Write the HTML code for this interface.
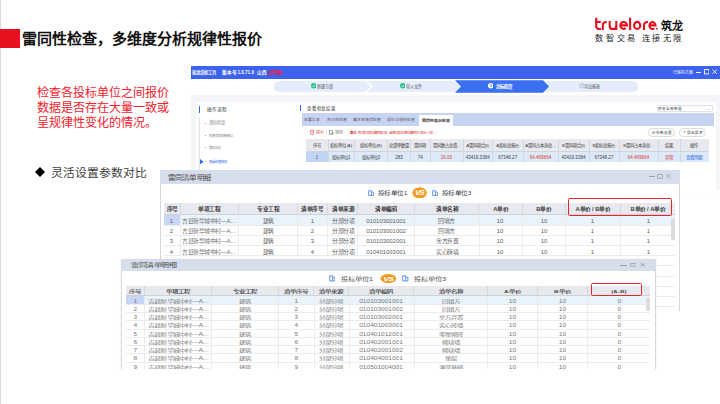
<!DOCTYPE html>
<html lang="zh-CN">
<head>
<meta charset="utf-8">
<style>
*{margin:0;padding:0;box-sizing:border-box}
html,body{width:720px;height:404px;overflow:hidden;background:#fff;font-family:"Liberation Sans",sans-serif}
.a{position:absolute}
.t{display:flex;align-items:center;white-space:nowrap;line-height:1}
.slide{position:absolute;left:0;top:0;width:720px;height:404px;background:#fff;overflow:hidden}
.edge{left:0;top:0;width:1px;height:404px;background:#dcdcdc}
.redblk{left:0;top:29px;width:20px;height:19px;background:#e8101f}
.title{left:22px;top:28.8px;font-size:15px;font-weight:900;color:#111;white-space:nowrap;line-height:20px}
.desc{left:37px;top:86.4px;font-size:12.1px;color:#f7202c;line-height:14.9px;white-space:nowrap}
.bullet{left:34.8px;top:166.8px;width:10px;height:10px}
.btxt{left:51px;top:165.7px;font-size:11.8px;color:#404040;line-height:14px;white-space:nowrap}
.nw{white-space:nowrap}
</style>
</head>
<body>
<div class="slide">
  <div class="a edge"></div>
  <div class="a redblk"></div>
  <div class="a title">雷同性检查，多维度分析规律性报价</div>
  <svg class="a" style="left:590px;top:14px" width="70" height="20" viewBox="590 14 70 20">
    <g fill="none" stroke="#e60f1e" stroke-width="2.1">
      <path d="M596.25 17.8V26.3Q596.25 29.05 599.2 29.05H601"/>
      <path d="M595 21.95H600.8"/>
      <path d="M602.8 30.1V25.2Q602.8 21.95 606.8 21.95"/>
      <path d="M609.7 20.9V25.9Q609.7 29.05 613 29.05Q616.3 29.05 616.3 25.9V20.9M616.3 25V30.1"/>
      <path d="M620.3 25.4H627.05A3.4 3.45 0 1 0 625.7 28.2"/>
      <path d="M630.1 17.7V30.1"/>
      <ellipse cx="637.15" cy="25.4" rx="3.1" ry="3.55"/>
      <path d="M644 30.1V25.2Q644 21.95 648 21.95"/>
      <path d="M649.5 25.4H655.5A3.05 3.45 0 1 0 654.4 28.2"/>
    </g>
    <circle cx="656.9" cy="28.7" r="0.9" fill="#e60f1e"/>
  </svg>
  <div class="a nw" style="left:660.5px;top:18.5px;font-size:11px;font-weight:bold;color:#111;line-height:14px">筑龙</div>
  <div class="a nw" style="left:595.2px;top:34.3px;font-size:8.2px;color:#1a1a1a;letter-spacing:2.75px;line-height:10px">数智交易</div>
  <div class="a nw" style="left:641.6px;top:34.3px;font-size:8.2px;color:#1a1a1a;letter-spacing:2.6px;line-height:10px">连接无限</div>
  <div class="a desc">检查各投标单位之间报价<br>数据是否存在大量一致或<br>呈规律性变化的情况。</div>
  <svg class="a bullet" viewBox="0 0 10 10"><path d="M5 0L10 5L5 10L0 5Z" fill="#000"/></svg>
  <div class="a btxt">灵活设置参数对比</div>
<div class="a" style="left:191px;top:66px;width:529px;height:124px;background:#f5f6fa"></div><div class="a" style="left:191px;top:65.8px;width:529px;height:13.2px;background:#3c62ef"></div><div class="a t" style="left:192.2px;top:66px;width:30px;height:13px;justify-content:flex-start;font-size:4.3px;color:#fff;font-weight:bold;"><span style="display:inline-block;position:relative;top:0.45px;">筑龙清标工具</span></div><div class="a t" style="left:222.4px;top:66px;width:34px;height:13px;justify-content:flex-start;font-size:4.6px;color:#fff;font-weight:bold;"><span style="display:inline-block;position:relative;top:0.85px;">版本号1.0.71.0</span></div><div class="a t" style="left:256.9px;top:66px;width:12px;height:13px;justify-content:flex-start;font-size:4.6px;color:#fff;font-weight:bold;"><span style="display:inline-block;position:relative;top:0.85px;">山西</span></div><div class="a t" style="left:268px;top:66px;width:20px;height:13px;justify-content:flex-start;font-size:4.4px;color:#e8203c;font-weight:bold;"><span style="display:inline-block;position:relative;top:0.45px;">(试用版)</span></div><div class="a t" style="left:673.3px;top:66px;width:22px;height:13px;justify-content:flex-start;font-size:4.0px;color:#fff;font-weight:normal;"><span style="display:inline-block;position:relative;top:0.45px;">已保存方案</span></div><div class="a" style="left:696.3px;top:71.6px;width:4.5px;height:0.8px;background:#fff"></div><svg class="a" style="left:703.8px;top:69.2px" width="5.4" height="5.4" viewBox="0 0 5.4 5.4"><rect x="0.5" y="0.5" width="4.4" height="4.4" fill="none" stroke="#fff" stroke-width="0.9"/></svg><svg class="a" style="left:711.5px;top:69.2px" width="5.4" height="5.4" viewBox="0 0 5.4 5.4"><path d="M0.5 0.5L4.9 4.9M4.9 0.5L0.5 4.9" stroke="#fff" stroke-width="0.9"/></svg><div class="a" style="left:191px;top:79px;width:529px;height:16px;background:#fff"></div><div class="a" style="left:273.6px;top:81px;width:364.4px;height:11px;background:#e5ecfb;border-radius:5.5px"></div><svg class="a" style="left:273px;top:81px;overflow:visible" width="366" height="11" viewBox="0 0 366 11"><path d="M93 0L99 5.5L93 11" fill="none" stroke="#fff" stroke-width="1.2"/><path d="M182 -0.7H270L276 5.5L270 11.8H182L188 5.5Z" fill="#3a6ff0"/></svg><svg class="a" style="left:310.5px;top:83.3px" width="5.5" height="5.5" viewBox="0 0 10 10"><circle cx="5" cy="5" r="5" fill="#2cc28a"/><path d="M2.7 5.2L4.4 6.9L7.4 3.4" fill="none" stroke="#fff" stroke-width="1.4"/></svg><div class="a t" style="left:317px;top:81px;width:20px;height:11px;justify-content:flex-start;font-size:4.2px;color:#555;font-weight:normal;"><span style="display:inline-block;position:relative;top:0.45px;">新建方案</span></div><svg class="a" style="left:399.5px;top:83.3px" width="5.5" height="5.5" viewBox="0 0 10 10"><circle cx="5" cy="5" r="5" fill="#2cc28a"/><path d="M2.7 5.2L4.4 6.9L7.4 3.4" fill="none" stroke="#fff" stroke-width="1.4"/></svg><div class="a t" style="left:406px;top:81px;width:20px;height:11px;justify-content:flex-start;font-size:4.2px;color:#555;font-weight:normal;"><span style="display:inline-block;position:relative;top:0.45px;">导入文件</span></div><svg class="a" style="left:487.5px;top:83.3px" width="5.5" height="5.5" viewBox="0 0 10 10"><circle cx="5" cy="5" r="5" fill="#fff"/><text x="5" y="7.6" font-size="7" text-anchor="middle" fill="#3a6ff0" font-family="Liberation Sans" font-weight="bold">3</text></svg><div class="a t" style="left:495.5px;top:81px;width:20px;height:11px;justify-content:flex-start;font-size:4.5px;color:#fff;font-weight:bold;"><span style="display:inline-block;position:relative;top:0.85px;">清标检查</span></div><svg class="a" style="left:578.5px;top:83.3px" width="5.5" height="5.5" viewBox="0 0 10 10"><circle cx="5" cy="5" r="4.3" fill="none" stroke="#9aa8c8" stroke-width="1"/><text x="5" y="7.3" font-size="6" text-anchor="middle" fill="#9aa8c8" font-family="Liberation Sans">4</text></svg><div class="a t" style="left:584px;top:81px;width:20px;height:11px;justify-content:flex-start;font-size:4.2px;color:#555;font-weight:normal;"><span style="display:inline-block;position:relative;top:0.45px;">导出报表</span></div><div class="a" style="left:195.5px;top:102px;width:104px;height:90px;background:#fff;box-shadow:0 0 1px rgba(0,0,0,0.05)"></div><div class="a" style="left:198.8px;top:106px;width:1.2px;height:6.5px;background:#2f6bf0"></div><div class="a t" style="left:206.5px;top:105px;width:30px;height:9px;justify-content:flex-start;font-size:4.6px;color:#333;font-weight:normal;"><span style="display:inline-block;position:relative;top:0.85px;">操作流程</span></div><div class="a" style="left:199.3px;top:116.5px;width:0.6px;height:80px;background:#e2e2e2"></div><div class="a" style="left:205.2px;top:122.6px;width:1px;height:0.9px;background:#aaa"></div><div class="a t" style="left:208.5px;top:119px;width:40px;height:8px;justify-content:flex-start;font-size:4.3px;color:#888;font-weight:normal;"><span style="display:inline-block;position:relative;top:0.45px;">清标检查</span></div><div class="a" style="left:205.2px;top:135.1px;width:1px;height:0.9px;background:#aaa"></div><div class="a t" style="left:208.5px;top:131.5px;width:40px;height:8px;justify-content:flex-start;font-size:3.45px;color:#888;font-weight:normal;"><span style="display:inline-block;position:relative;top:1.4px;">检查项和参数确认</span></div><div class="a" style="left:205.2px;top:147.29999999999998px;width:1px;height:0.9px;background:#aaa"></div><div class="a t" style="left:208.5px;top:143.7px;width:40px;height:8px;justify-content:flex-start;font-size:3.3px;color:#888;font-weight:normal;"><span style="display:inline-block;position:relative;top:1.4px;">清标分析</span></div><div class="a" style="left:205.2px;top:161.1px;width:1px;height:0.9px;background:#aaa"></div><div class="a t" style="left:208.5px;top:157.5px;width:40px;height:8px;justify-content:flex-start;font-size:3.3px;color:#2f6bf0;font-weight:normal;"><span style="display:inline-block;position:relative;top:1.4px;">查看检查结果</span></div><svg class="a" style="left:199.8px;top:158.8px" width="4" height="5.5" viewBox="0 0 4 5.5"><path d="M0 0L3.6 2.75L0 5.5Z" fill="#2f6bf0"/></svg><div class="a" style="left:300px;top:102.3px;width:415.7px;height:90px;background:#fff;box-shadow:0 0 1px rgba(0,0,0,0.05)"></div><div class="a" style="left:300px;top:105px;width:1.2px;height:6.2px;background:#2f6bf0"></div><div class="a t" style="left:306.5px;top:104px;width:40px;height:9px;justify-content:flex-start;font-size:4.6px;color:#333;font-weight:normal;"><span style="display:inline-block;position:relative;top:0.85px;transform:scaleX(0.96);transform-origin:left center;">查看检查结果</span></div><div class="a" style="left:656.5px;top:104.5px;width:56px;height:7.3px;background:#fff;border:0.6px solid #dfe3ea;border-radius:1px"></div><div class="a t" style="left:658px;top:104.5px;width:40px;height:7.3px;justify-content:flex-start;font-size:3.6px;color:#444;font-weight:normal;"><span style="display:inline-block;position:relative;top:1.4px;">预览全部数据</span></div><div class="a t" style="left:705px;top:104.5px;width:6px;height:7.3px;justify-content:center;font-size:4px;color:#999;font-weight:normal;"><span style="display:inline-block;position:relative;top:0.45px;">&#8964;</span></div><div class="a" style="left:302px;top:113.2px;width:411.5px;height:12.6px;background:#c6d3f3"></div><div class="a t" style="left:304px;top:113.2px;width:18px;height:12.6px;justify-content:flex-start;font-size:3.9px;color:#555;font-weight:normal;"><span style="display:inline-block;position:relative;top:0.45px;">结果汇总</span></div><div class="a t" style="left:326.5px;top:113.2px;width:21.5px;height:12.6px;justify-content:flex-start;font-size:3.9px;color:#555;font-weight:normal;"><span style="display:inline-block;position:relative;top:0.45px;">符合性检查</span></div><div class="a t" style="left:352.8px;top:113.2px;width:28px;height:12.6px;justify-content:flex-start;font-size:3.9px;color:#555;font-weight:normal;"><span style="display:inline-block;position:relative;top:0.45px;">算术性错误检查</span></div><div class="a t" style="left:387px;top:113.2px;width:28px;height:12.6px;justify-content:flex-start;font-size:3.9px;color:#555;font-weight:normal;"><span style="display:inline-block;position:relative;top:0.45px;">报价合理性检查</span></div><div class="a" style="left:419px;top:114.8px;width:33.5px;height:11px;background:#fff"></div><div class="a t" style="left:419px;top:114.8px;width:33.5px;height:11px;justify-content:center;font-size:3.9px;color:#333;font-weight:bold;"><span style="display:inline-block;position:relative;top:0.45px;">雷同性情况检查</span></div><svg class="a" style="left:310px;top:129.5px" width="5" height="5" viewBox="0 0 5 5"><rect x="0.5" y="0.5" width="3.2" height="4" fill="none" stroke="#f06060" stroke-width="0.6"/><path d="M1.3 1.8H3M1.3 2.8H3" stroke="#f06060" stroke-width="0.5"/></svg><div class="a t" style="left:316px;top:128px;width:10px;height:8px;justify-content:flex-start;font-size:4.0px;color:#f04848;font-weight:normal;"><span style="display:inline-block;position:relative;top:1.0px;">提示</span></div><div class="a" style="left:326.3px;top:129.5px;width:0.5px;height:5px;background:#ddd"></div><svg class="a" style="left:329px;top:129.5px" width="5" height="5" viewBox="0 0 5 5"><rect x="0.5" y="0.5" width="3" height="3.6" fill="none" stroke="#777" stroke-width="0.6"/><circle cx="3.4" cy="3.6" r="1" fill="none" stroke="#777" stroke-width="0.5"/></svg><div class="a t" style="left:335px;top:128px;width:10px;height:8px;justify-content:flex-start;font-size:4.0px;color:#777;font-weight:normal;"><span style="display:inline-block;position:relative;top:1.0px;">规则</span></div><div class="a t" style="left:349.5px;top:128px;width:100px;height:8px;justify-content:flex-start;font-size:3.4px;color:#e82a2a;font-weight:normal;"><span style="display:inline-block;position:relative;top:1.4px;transform:scaleX(1.045);transform-origin:left center;"><b>备注:</b>&nbsp;两家只显示雷同结果（A单位和B单位雷同只显示一次）。</span></div><div class="a" style="left:647.7px;top:128px;width:27.7px;height:8.6px;background:#fff;border:0.6px solid #d8dce4;border-radius:4.3px"></div><div class="a t" style="left:647.7px;top:128px;width:27.7px;height:8.6px;justify-content:center;font-size:3.6px;color:#333;font-weight:normal;"><span style="display:inline-block;position:relative;top:1.4px;">&#10227;&nbsp;参数设置</span></div><div class="a" style="left:678.8px;top:128px;width:27.2px;height:8.6px;background:#fff;border:0.6px solid #d8dce4;border-radius:4.3px"></div><div class="a t" style="left:678.8px;top:128px;width:27.2px;height:8.6px;justify-content:center;font-size:3.6px;color:#333;font-weight:normal;"><span style="display:inline-block;position:relative;top:1.4px;">&#8599;&nbsp;导出报表</span></div><div class="a" style="left:306.25px;top:138.8px;width:402.5px;height:12.5px;background:#e7e9ee"></div><div class="a" style="left:306.25px;top:151.3px;width:402.5px;height:10.5px;background:#dbe9f8"></div><div class="a" style="left:306.25px;top:151.3px;width:21.75px;height:10.5px;background:#c2d4f6"></div><div class="a t" style="left:306.25px;top:138.8px;width:21.75px;height:12.5px;justify-content:center;font-size:4.3px;color:#333;font-weight:normal;"><span style="display:inline-block;position:relative;top:1.0px;">序号</span></div><div class="a t" style="left:306.25px;top:151.3px;width:21.75px;height:10.5px;justify-content:center;font-size:4.5px;color:#555;font-weight:normal;"><span style="display:inline-block;position:relative;top:1.3px;">1</span></div><div class="a t" style="left:328px;top:138.8px;width:26.5px;height:12.5px;justify-content:center;font-size:4.3px;color:#333;font-weight:normal;"><span style="display:inline-block;position:relative;top:1.0px;">投标单位(A)</span></div><div class="a t" style="left:328px;top:151.3px;width:26.5px;height:10.5px;justify-content:center;font-size:4.5px;color:#444;font-weight:normal;"><span style="display:inline-block;position:relative;top:1.3px;">投标单位1</span></div><div class="a" style="left:327.7px;top:138.8px;width:0.6px;height:23px;background:#d3d8e0"></div><div class="a t" style="left:354.5px;top:138.8px;width:33.0px;height:12.5px;justify-content:center;font-size:4.3px;color:#333;font-weight:normal;"><span style="display:inline-block;position:relative;top:1.0px;">投标单位(B)</span></div><div class="a t" style="left:354.5px;top:151.3px;width:33.0px;height:10.5px;justify-content:center;font-size:4.5px;color:#444;font-weight:normal;"><span style="display:inline-block;position:relative;top:1.3px;">投标单位3</span></div><div class="a" style="left:354.2px;top:138.8px;width:0.6px;height:23px;background:#d3d8e0"></div><div class="a t" style="left:387.5px;top:138.8px;width:23.0px;height:12.5px;justify-content:center;font-size:4.3px;color:#333;font-weight:normal;"><span style="display:inline-block;position:relative;top:1.0px;">总清单数量</span></div><div class="a t" style="left:387.5px;top:151.3px;width:23.0px;height:10.5px;justify-content:center;font-size:4.5px;color:#444;font-weight:normal;"><span style="display:inline-block;position:relative;top:1.3px;">283</span></div><div class="a" style="left:387.2px;top:138.8px;width:0.6px;height:23px;background:#d3d8e0"></div><div class="a t" style="left:410.5px;top:138.8px;width:19.5px;height:12.5px;justify-content:center;font-size:4.3px;color:#333;font-weight:normal;"><span style="display:inline-block;position:relative;top:1.0px;">雷同项</span></div><div class="a t" style="left:410.5px;top:151.3px;width:19.5px;height:10.5px;justify-content:center;font-size:4.5px;color:#444;font-weight:normal;"><span style="display:inline-block;position:relative;top:1.3px;">74</span></div><div class="a" style="left:410.2px;top:138.8px;width:0.6px;height:23px;background:#d3d8e0"></div><div class="a t" style="left:430px;top:138.8px;width:33px;height:12.5px;justify-content:center;font-size:4.3px;color:#333;font-weight:normal;"><span style="display:inline-block;position:relative;top:1.0px;">雷同数占总清...</span></div><div class="a t" style="left:430px;top:151.3px;width:33px;height:10.5px;justify-content:center;font-size:4.5px;color:#e03838;font-weight:normal;"><span style="display:inline-block;position:relative;top:1.3px;">26.00</span></div><div class="a" style="left:429.7px;top:138.8px;width:0.6px;height:23px;background:#d3d8e0"></div><div class="a t" style="left:463px;top:138.8px;width:29.5px;height:12.5px;justify-content:center;font-size:4.3px;color:#333;font-weight:normal;"><span style="display:inline-block;position:relative;top:1.0px;">A雷同项合价</span></div><div class="a t" style="left:463px;top:151.3px;width:29.5px;height:10.5px;justify-content:center;font-size:4.5px;color:#444;font-weight:normal;"><span style="display:inline-block;position:relative;top:1.3px;">43419.3384</span></div><div class="a" style="left:462.7px;top:138.8px;width:0.6px;height:23px;background:#d3d8e0"></div><div class="a t" style="left:492.5px;top:138.8px;width:30.5px;height:12.5px;justify-content:center;font-size:4.3px;color:#333;font-weight:normal;"><span style="display:inline-block;position:relative;top:1.0px;">A投标总报价</span></div><div class="a t" style="left:492.5px;top:151.3px;width:30.5px;height:10.5px;justify-content:center;font-size:4.5px;color:#444;font-weight:normal;"><span style="display:inline-block;position:relative;top:1.3px;">67348.27</span></div><div class="a" style="left:492.2px;top:138.8px;width:0.6px;height:23px;background:#d3d8e0"></div><div class="a t" style="left:523px;top:138.8px;width:35px;height:12.5px;justify-content:center;font-size:4.3px;color:#333;font-weight:normal;"><span style="display:inline-block;position:relative;top:1.0px;">A雷同占本身总...</span></div><div class="a t" style="left:523px;top:151.3px;width:35px;height:10.5px;justify-content:center;font-size:4.5px;color:#e03838;font-weight:normal;"><span style="display:inline-block;position:relative;top:1.3px;">64.469864</span></div><div class="a" style="left:522.7px;top:138.8px;width:0.6px;height:23px;background:#d3d8e0"></div><div class="a t" style="left:558px;top:138.8px;width:31px;height:12.5px;justify-content:center;font-size:4.3px;color:#333;font-weight:normal;"><span style="display:inline-block;position:relative;top:1.0px;">B雷同项合价</span></div><div class="a t" style="left:558px;top:151.3px;width:31px;height:10.5px;justify-content:center;font-size:4.5px;color:#444;font-weight:normal;"><span style="display:inline-block;position:relative;top:1.3px;">43419.3384</span></div><div class="a" style="left:557.7px;top:138.8px;width:0.6px;height:23px;background:#d3d8e0"></div><div class="a t" style="left:589px;top:138.8px;width:30px;height:12.5px;justify-content:center;font-size:4.3px;color:#333;font-weight:normal;"><span style="display:inline-block;position:relative;top:1.0px;">B投标总报价</span></div><div class="a t" style="left:589px;top:151.3px;width:30px;height:10.5px;justify-content:center;font-size:4.5px;color:#444;font-weight:normal;"><span style="display:inline-block;position:relative;top:1.3px;">67348.27</span></div><div class="a" style="left:588.7px;top:138.8px;width:0.6px;height:23px;background:#d3d8e0"></div><div class="a t" style="left:619px;top:138.8px;width:39px;height:12.5px;justify-content:center;font-size:4.3px;color:#333;font-weight:normal;"><span style="display:inline-block;position:relative;top:1.0px;">B雷同占本身总...</span></div><div class="a t" style="left:619px;top:151.3px;width:39px;height:10.5px;justify-content:center;font-size:4.5px;color:#e03838;font-weight:normal;"><span style="display:inline-block;position:relative;top:1.3px;">64.469864</span></div><div class="a" style="left:618.7px;top:138.8px;width:0.6px;height:23px;background:#d3d8e0"></div><div class="a t" style="left:658px;top:138.8px;width:22px;height:12.5px;justify-content:center;font-size:4.3px;color:#333;font-weight:normal;"><span style="display:inline-block;position:relative;top:1.0px;">结果</span></div><div class="a t" style="left:658px;top:151.3px;width:22px;height:10.5px;justify-content:center;font-size:4.5px;color:#e02020;font-weight:normal;"><span style="display:inline-block;position:relative;top:1.3px;">异常</span></div><div class="a" style="left:657.7px;top:138.8px;width:0.6px;height:23px;background:#d3d8e0"></div><div class="a t" style="left:680px;top:138.8px;width:28.799999999999955px;height:12.5px;justify-content:center;font-size:4.3px;color:#333;font-weight:normal;"><span style="display:inline-block;position:relative;top:1.0px;">操作</span></div><div class="a t" style="left:680px;top:151.3px;width:28.799999999999955px;height:10.5px;justify-content:center;font-size:4.5px;color:#2f6bf0;font-weight:normal;"><span style="display:inline-block;position:relative;top:1.3px;">查看明细</span></div><div class="a" style="left:679.7px;top:138.8px;width:0.6px;height:23px;background:#d3d8e0"></div><div class="a" style="left:306.25px;top:151px;width:402.5px;height:0.6px;background:#d0d4dc"></div><div class="a" style="left:159.7px;top:169.8px;width:520px;height:141.2px;background:#fff;border:0.7px solid #d4d8e0;border-bottom:none"></div><div class="a" style="left:164px;top:265.4px;width:511px;height:0.5px;background:#ececec"></div><div class="a" style="left:164px;top:275.6px;width:511px;height:0.5px;background:#ececec"></div><div class="a" style="left:164px;top:285.8px;width:511px;height:0.5px;background:#ececec"></div><div class="a" style="left:164px;top:296.0px;width:511px;height:0.5px;background:#ececec"></div><div class="a" style="left:164px;top:306.2px;width:511px;height:0.5px;background:#ececec"></div><div class="a" style="left:159.7px;top:169.8px;width:520px;height:13.8px;background:#d6ddeb"></div><div class="a t" style="left:168.3px;top:169.8px;width:60px;height:13.8px;justify-content:flex-start;font-size:6.4px;color:#4a4a4a;font-weight:500;"><span style="display:inline-block;position:relative;top:1.2px;transform:scaleX(1.19);transform-origin:left center;">雷同清单明细</span></div><div class="a" style="left:649.2px;top:176.3px;width:5.4px;height:0.8px;background:#9aa0ac"></div><svg class="a" style="left:657px;top:174.3px" width="6.2" height="4.8" viewBox="0 0 6.2 4.8"><rect x="0.45" y="0.45" width="5.3" height="3.9" fill="none" stroke="#9aa0ac" stroke-width="0.9" rx="0.4"/></svg><svg class="a" style="left:665.8px;top:174.4px" width="5" height="4.5" viewBox="0 0 5 4.5"><path d="M0.4 0.3L4.6 4.2M4.6 0.3L0.4 4.2" stroke="#9aa0ac" stroke-width="0.8"/></svg><svg class="a" style="left:367.6px;top:190px" width="6.2" height="6.2" viewBox="0 0 10 10"><path d="M1 1.2H5.6V3.4H9V9H1Z M5.6 3.4V9" fill="none" stroke="#6090f4" stroke-width="1.5"/></svg><div class="a t" style="left:377.5px;top:187px;width:40px;height:12px;justify-content:flex-start;font-size:6.2px;color:#4a4a4a;font-weight:normal;"><span style="display:inline-block;position:relative;top:0.3px;transform:scaleX(1.07);transform-origin:left center;">投标单位1</span></div><svg class="a" style="left:412.2px;top:186.9px" width="15.2" height="11.5" viewBox="0 0 20 16" preserveAspectRatio="none"><ellipse cx="10" cy="8" rx="9.5" ry="7.8" fill="#f39a26"/><text x="10" y="11.6" font-size="10.5" font-style="italic" font-weight="bold" text-anchor="middle" fill="#fff" font-family="Liberation Sans" letter-spacing="-0.8">VS</text></svg><svg class="a" style="left:431.6px;top:190px" width="6.2" height="6.2" viewBox="0 0 10 10"><path d="M1 1.2H5.6V3.4H9V9H1Z M5.6 3.4V9" fill="none" stroke="#6090f4" stroke-width="1.5"/></svg><div class="a t" style="left:442px;top:187px;width:40px;height:12px;justify-content:flex-start;font-size:6.2px;color:#4a4a4a;font-weight:normal;"><span style="display:inline-block;position:relative;top:0.3px;transform:scaleX(1.07);transform-origin:left center;">投标单位3</span></div><div class="a" style="left:164px;top:202.8px;width:511px;height:12.1px;background:#e8e9ee;border-bottom:0.7px solid #cfd2d8"></div><div class="a t" style="left:164px;top:202.8px;width:15.900000000000006px;height:12.1px;justify-content:center;font-size:5.2px;color:#3a3a3a;font-weight:bold;"><span style="display:inline-block;position:relative;top:0.8px;transform:scaleX(1.1);transform-origin:center center;">序号</span></div><div class="a t" style="left:179.9px;top:202.8px;width:58.599999999999994px;height:12.1px;justify-content:center;font-size:5.2px;color:#3a3a3a;font-weight:bold;"><span style="display:inline-block;position:relative;top:0.8px;transform:scaleX(1.1);transform-origin:center center;">单项工程</span></div><div class="a" style="left:179.55px;top:202.8px;width:0.7px;height:12.1px;background:#d6d8de"></div><div class="a t" style="left:238.5px;top:202.8px;width:58.5px;height:12.1px;justify-content:center;font-size:5.2px;color:#3a3a3a;font-weight:bold;"><span style="display:inline-block;position:relative;top:0.8px;transform:scaleX(1.1);transform-origin:center center;">专业工程</span></div><div class="a" style="left:238.15px;top:202.8px;width:0.7px;height:12.1px;background:#d6d8de"></div><div class="a t" style="left:297px;top:202.8px;width:30.5px;height:12.1px;justify-content:center;font-size:5.2px;color:#3a3a3a;font-weight:bold;"><span style="display:inline-block;position:relative;top:0.8px;transform:scaleX(1.1);transform-origin:center center;">清单序号</span></div><div class="a" style="left:296.65px;top:202.8px;width:0.7px;height:12.1px;background:#d6d8de"></div><div class="a t" style="left:327.5px;top:202.8px;width:30.0px;height:12.1px;justify-content:center;font-size:5.2px;color:#3a3a3a;font-weight:bold;"><span style="display:inline-block;position:relative;top:0.8px;transform:scaleX(1.1);transform-origin:center center;">清单来源</span></div><div class="a" style="left:327.15px;top:202.8px;width:0.7px;height:12.1px;background:#d6d8de"></div><div class="a t" style="left:357.5px;top:202.8px;width:57.0px;height:12.1px;justify-content:center;font-size:5.2px;color:#3a3a3a;font-weight:bold;"><span style="display:inline-block;position:relative;top:0.8px;transform:scaleX(1.1);transform-origin:center center;">清单编码</span></div><div class="a" style="left:357.15px;top:202.8px;width:0.7px;height:12.1px;background:#d6d8de"></div><div class="a t" style="left:414.5px;top:202.8px;width:64.25px;height:12.1px;justify-content:center;font-size:5.2px;color:#3a3a3a;font-weight:bold;"><span style="display:inline-block;position:relative;top:0.8px;transform:scaleX(1.1);transform-origin:center center;">清单名称</span></div><div class="a" style="left:414.15px;top:202.8px;width:0.7px;height:12.1px;background:#d6d8de"></div><div class="a t" style="left:478.75px;top:202.8px;width:43.25px;height:12.1px;justify-content:center;font-size:5.2px;color:#3a3a3a;font-weight:bold;"><span style="display:inline-block;position:relative;top:0.8px;transform:scaleX(1.1);transform-origin:center center;">A单价</span></div><div class="a" style="left:478.4px;top:202.8px;width:0.7px;height:12.1px;background:#d6d8de"></div><div class="a t" style="left:522px;top:202.8px;width:43.5px;height:12.1px;justify-content:center;font-size:5.2px;color:#3a3a3a;font-weight:bold;"><span style="display:inline-block;position:relative;top:0.8px;transform:scaleX(1.1);transform-origin:center center;">B单价</span></div><div class="a" style="left:521.65px;top:202.8px;width:0.7px;height:12.1px;background:#d6d8de"></div><div class="a t" style="left:565.5px;top:202.8px;width:54.5px;height:12.1px;justify-content:center;font-size:5.2px;color:#3a3a3a;font-weight:bold;"><span style="display:inline-block;position:relative;top:0.8px;transform:scaleX(1.1);transform-origin:center center;">A单价 / B单价</span></div><div class="a" style="left:565.15px;top:202.8px;width:0.7px;height:12.1px;background:#d6d8de"></div><div class="a t" style="left:620px;top:202.8px;width:56px;height:12.1px;justify-content:center;font-size:5.2px;color:#3a3a3a;font-weight:bold;"><span style="display:inline-block;position:relative;top:0.8px;transform:scaleX(1.1);transform-origin:center center;">B单价 / A单价</span></div><div class="a" style="left:619.65px;top:202.8px;width:0.7px;height:12.1px;background:#d6d8de"></div><div class="a" style="left:164px;top:214.9px;width:511px;height:10.2px;background:#e9f3fc"></div><div class="a" style="left:164px;top:214.9px;width:15.9px;height:10.2px;background:#c6d6f4"></div><div class="a" style="left:164px;top:224.6px;width:511px;height:0.5px;background:#ececec"></div><div class="a t" style="left:164px;top:214.9px;width:15.900000000000006px;height:10.2px;justify-content:center;font-size:5.4px;color:#606060;font-weight:normal;"><span style="display:inline-block;position:relative;top:1.8px;transform:scaleX(1.1);transform-origin:center center;">1</span></div><div class="a t" style="left:182.4px;top:214.9px;width:58.599999999999994px;height:10.2px;justify-content:flex-start;font-size:5.4px;color:#707070;font-weight:normal;"><span style="display:inline-block;position:relative;top:1.8px;transform:scaleX(1.1);transform-origin:left center;">吉县新华城中村—A...</span></div><div class="a" style="left:179.65px;top:214.9px;width:0.5px;height:10.2px;background:#ececec"></div><div class="a t" style="left:238.5px;top:214.9px;width:58.5px;height:10.2px;justify-content:center;font-size:5.4px;color:#606060;font-weight:normal;"><span style="display:inline-block;position:relative;top:1.8px;transform:scaleX(1.1);transform-origin:center center;">建筑</span></div><div class="a" style="left:238.25px;top:214.9px;width:0.5px;height:10.2px;background:#ececec"></div><div class="a t" style="left:297px;top:214.9px;width:30.5px;height:10.2px;justify-content:center;font-size:5.4px;color:#606060;font-weight:normal;"><span style="display:inline-block;position:relative;top:1.8px;transform:scaleX(1.1);transform-origin:center center;">1</span></div><div class="a" style="left:296.75px;top:214.9px;width:0.5px;height:10.2px;background:#ececec"></div><div class="a t" style="left:327.5px;top:214.9px;width:30.0px;height:10.2px;justify-content:center;font-size:5.4px;color:#606060;font-weight:normal;"><span style="display:inline-block;position:relative;top:1.8px;transform:scaleX(1.1);transform-origin:center center;">分部分项</span></div><div class="a" style="left:327.25px;top:214.9px;width:0.5px;height:10.2px;background:#ececec"></div><div class="a t" style="left:357.5px;top:214.9px;width:57.0px;height:10.2px;justify-content:center;font-size:5.4px;color:#606060;font-weight:normal;"><span style="display:inline-block;position:relative;top:1.8px;transform:scaleX(1.1);transform-origin:center center;">010103001001</span></div><div class="a" style="left:357.25px;top:214.9px;width:0.5px;height:10.2px;background:#ececec"></div><div class="a t" style="left:414.5px;top:214.9px;width:64.25px;height:10.2px;justify-content:center;font-size:5.4px;color:#606060;font-weight:normal;"><span style="display:inline-block;position:relative;top:1.8px;transform:scaleX(1.1);transform-origin:center center;">回填方</span></div><div class="a" style="left:414.25px;top:214.9px;width:0.5px;height:10.2px;background:#ececec"></div><div class="a t" style="left:478.75px;top:214.9px;width:43.25px;height:10.2px;justify-content:center;font-size:5.4px;color:#606060;font-weight:normal;"><span style="display:inline-block;position:relative;top:1.8px;transform:scaleX(1.1);transform-origin:center center;">10</span></div><div class="a" style="left:478.5px;top:214.9px;width:0.5px;height:10.2px;background:#ececec"></div><div class="a t" style="left:522px;top:214.9px;width:43.5px;height:10.2px;justify-content:center;font-size:5.4px;color:#606060;font-weight:normal;"><span style="display:inline-block;position:relative;top:1.8px;transform:scaleX(1.1);transform-origin:center center;">10</span></div><div class="a" style="left:521.75px;top:214.9px;width:0.5px;height:10.2px;background:#ececec"></div><div class="a t" style="left:565.5px;top:214.9px;width:54.5px;height:10.2px;justify-content:center;font-size:5.4px;color:#606060;font-weight:normal;"><span style="display:inline-block;position:relative;top:1.8px;transform:scaleX(1.1);transform-origin:center center;">1</span></div><div class="a" style="left:565.25px;top:214.9px;width:0.5px;height:10.2px;background:#ececec"></div><div class="a t" style="left:620px;top:214.9px;width:56px;height:10.2px;justify-content:center;font-size:5.4px;color:#606060;font-weight:normal;"><span style="display:inline-block;position:relative;top:1.8px;transform:scaleX(1.1);transform-origin:center center;">1</span></div><div class="a" style="left:619.75px;top:214.9px;width:0.5px;height:10.2px;background:#ececec"></div><div class="a" style="left:164px;top:234.79999999999998px;width:511px;height:0.5px;background:#ececec"></div><div class="a t" style="left:164px;top:225.1px;width:15.900000000000006px;height:10.2px;justify-content:center;font-size:5.4px;color:#606060;font-weight:normal;"><span style="display:inline-block;position:relative;top:1.8px;transform:scaleX(1.1);transform-origin:center center;">2</span></div><div class="a t" style="left:182.4px;top:225.1px;width:58.599999999999994px;height:10.2px;justify-content:flex-start;font-size:5.4px;color:#707070;font-weight:normal;"><span style="display:inline-block;position:relative;top:1.8px;transform:scaleX(1.1);transform-origin:left center;">吉县新华城中村—A...</span></div><div class="a" style="left:179.65px;top:225.1px;width:0.5px;height:10.2px;background:#ececec"></div><div class="a t" style="left:238.5px;top:225.1px;width:58.5px;height:10.2px;justify-content:center;font-size:5.4px;color:#606060;font-weight:normal;"><span style="display:inline-block;position:relative;top:1.8px;transform:scaleX(1.1);transform-origin:center center;">建筑</span></div><div class="a" style="left:238.25px;top:225.1px;width:0.5px;height:10.2px;background:#ececec"></div><div class="a t" style="left:297px;top:225.1px;width:30.5px;height:10.2px;justify-content:center;font-size:5.4px;color:#606060;font-weight:normal;"><span style="display:inline-block;position:relative;top:1.8px;transform:scaleX(1.1);transform-origin:center center;">2</span></div><div class="a" style="left:296.75px;top:225.1px;width:0.5px;height:10.2px;background:#ececec"></div><div class="a t" style="left:327.5px;top:225.1px;width:30.0px;height:10.2px;justify-content:center;font-size:5.4px;color:#606060;font-weight:normal;"><span style="display:inline-block;position:relative;top:1.8px;transform:scaleX(1.1);transform-origin:center center;">分部分项</span></div><div class="a" style="left:327.25px;top:225.1px;width:0.5px;height:10.2px;background:#ececec"></div><div class="a t" style="left:357.5px;top:225.1px;width:57.0px;height:10.2px;justify-content:center;font-size:5.4px;color:#606060;font-weight:normal;"><span style="display:inline-block;position:relative;top:1.8px;transform:scaleX(1.1);transform-origin:center center;">010103001002</span></div><div class="a" style="left:357.25px;top:225.1px;width:0.5px;height:10.2px;background:#ececec"></div><div class="a t" style="left:414.5px;top:225.1px;width:64.25px;height:10.2px;justify-content:center;font-size:5.4px;color:#606060;font-weight:normal;"><span style="display:inline-block;position:relative;top:1.8px;transform:scaleX(1.1);transform-origin:center center;">回填方</span></div><div class="a" style="left:414.25px;top:225.1px;width:0.5px;height:10.2px;background:#ececec"></div><div class="a t" style="left:478.75px;top:225.1px;width:43.25px;height:10.2px;justify-content:center;font-size:5.4px;color:#606060;font-weight:normal;"><span style="display:inline-block;position:relative;top:1.8px;transform:scaleX(1.1);transform-origin:center center;">10</span></div><div class="a" style="left:478.5px;top:225.1px;width:0.5px;height:10.2px;background:#ececec"></div><div class="a t" style="left:522px;top:225.1px;width:43.5px;height:10.2px;justify-content:center;font-size:5.4px;color:#606060;font-weight:normal;"><span style="display:inline-block;position:relative;top:1.8px;transform:scaleX(1.1);transform-origin:center center;">10</span></div><div class="a" style="left:521.75px;top:225.1px;width:0.5px;height:10.2px;background:#ececec"></div><div class="a t" style="left:565.5px;top:225.1px;width:54.5px;height:10.2px;justify-content:center;font-size:5.4px;color:#606060;font-weight:normal;"><span style="display:inline-block;position:relative;top:1.8px;transform:scaleX(1.1);transform-origin:center center;">1</span></div><div class="a" style="left:565.25px;top:225.1px;width:0.5px;height:10.2px;background:#ececec"></div><div class="a t" style="left:620px;top:225.1px;width:56px;height:10.2px;justify-content:center;font-size:5.4px;color:#606060;font-weight:normal;"><span style="display:inline-block;position:relative;top:1.8px;transform:scaleX(1.1);transform-origin:center center;">1</span></div><div class="a" style="left:619.75px;top:225.1px;width:0.5px;height:10.2px;background:#ececec"></div><div class="a" style="left:164px;top:245.0px;width:511px;height:0.5px;background:#ececec"></div><div class="a t" style="left:164px;top:235.3px;width:15.900000000000006px;height:10.2px;justify-content:center;font-size:5.4px;color:#606060;font-weight:normal;"><span style="display:inline-block;position:relative;top:1.8px;transform:scaleX(1.1);transform-origin:center center;">3</span></div><div class="a t" style="left:182.4px;top:235.3px;width:58.599999999999994px;height:10.2px;justify-content:flex-start;font-size:5.4px;color:#707070;font-weight:normal;"><span style="display:inline-block;position:relative;top:1.8px;transform:scaleX(1.1);transform-origin:left center;">吉县新华城中村—A...</span></div><div class="a" style="left:179.65px;top:235.3px;width:0.5px;height:10.2px;background:#ececec"></div><div class="a t" style="left:238.5px;top:235.3px;width:58.5px;height:10.2px;justify-content:center;font-size:5.4px;color:#606060;font-weight:normal;"><span style="display:inline-block;position:relative;top:1.8px;transform:scaleX(1.1);transform-origin:center center;">建筑</span></div><div class="a" style="left:238.25px;top:235.3px;width:0.5px;height:10.2px;background:#ececec"></div><div class="a t" style="left:297px;top:235.3px;width:30.5px;height:10.2px;justify-content:center;font-size:5.4px;color:#606060;font-weight:normal;"><span style="display:inline-block;position:relative;top:1.8px;transform:scaleX(1.1);transform-origin:center center;">3</span></div><div class="a" style="left:296.75px;top:235.3px;width:0.5px;height:10.2px;background:#ececec"></div><div class="a t" style="left:327.5px;top:235.3px;width:30.0px;height:10.2px;justify-content:center;font-size:5.4px;color:#606060;font-weight:normal;"><span style="display:inline-block;position:relative;top:1.8px;transform:scaleX(1.1);transform-origin:center center;">分部分项</span></div><div class="a" style="left:327.25px;top:235.3px;width:0.5px;height:10.2px;background:#ececec"></div><div class="a t" style="left:357.5px;top:235.3px;width:57.0px;height:10.2px;justify-content:center;font-size:5.4px;color:#606060;font-weight:normal;"><span style="display:inline-block;position:relative;top:1.8px;transform:scaleX(1.1);transform-origin:center center;">010103002001</span></div><div class="a" style="left:357.25px;top:235.3px;width:0.5px;height:10.2px;background:#ececec"></div><div class="a t" style="left:414.5px;top:235.3px;width:64.25px;height:10.2px;justify-content:center;font-size:5.4px;color:#606060;font-weight:normal;"><span style="display:inline-block;position:relative;top:1.8px;transform:scaleX(1.1);transform-origin:center center;">余方弃置</span></div><div class="a" style="left:414.25px;top:235.3px;width:0.5px;height:10.2px;background:#ececec"></div><div class="a t" style="left:478.75px;top:235.3px;width:43.25px;height:10.2px;justify-content:center;font-size:5.4px;color:#606060;font-weight:normal;"><span style="display:inline-block;position:relative;top:1.8px;transform:scaleX(1.1);transform-origin:center center;">10</span></div><div class="a" style="left:478.5px;top:235.3px;width:0.5px;height:10.2px;background:#ececec"></div><div class="a t" style="left:522px;top:235.3px;width:43.5px;height:10.2px;justify-content:center;font-size:5.4px;color:#606060;font-weight:normal;"><span style="display:inline-block;position:relative;top:1.8px;transform:scaleX(1.1);transform-origin:center center;">10</span></div><div class="a" style="left:521.75px;top:235.3px;width:0.5px;height:10.2px;background:#ececec"></div><div class="a t" style="left:565.5px;top:235.3px;width:54.5px;height:10.2px;justify-content:center;font-size:5.4px;color:#606060;font-weight:normal;"><span style="display:inline-block;position:relative;top:1.8px;transform:scaleX(1.1);transform-origin:center center;">1</span></div><div class="a" style="left:565.25px;top:235.3px;width:0.5px;height:10.2px;background:#ececec"></div><div class="a t" style="left:620px;top:235.3px;width:56px;height:10.2px;justify-content:center;font-size:5.4px;color:#606060;font-weight:normal;"><span style="display:inline-block;position:relative;top:1.8px;transform:scaleX(1.1);transform-origin:center center;">1</span></div><div class="a" style="left:619.75px;top:235.3px;width:0.5px;height:10.2px;background:#ececec"></div><div class="a" style="left:164px;top:255.2px;width:511px;height:0.5px;background:#ececec"></div><div class="a t" style="left:164px;top:245.5px;width:15.900000000000006px;height:10.2px;justify-content:center;font-size:5.4px;color:#606060;font-weight:normal;"><span style="display:inline-block;position:relative;top:1.8px;transform:scaleX(1.1);transform-origin:center center;">4</span></div><div class="a t" style="left:182.4px;top:245.5px;width:58.599999999999994px;height:10.2px;justify-content:flex-start;font-size:5.4px;color:#707070;font-weight:normal;"><span style="display:inline-block;position:relative;top:1.8px;transform:scaleX(1.1);transform-origin:left center;">吉县新华城中村—A...</span></div><div class="a" style="left:179.65px;top:245.5px;width:0.5px;height:10.2px;background:#ececec"></div><div class="a t" style="left:238.5px;top:245.5px;width:58.5px;height:10.2px;justify-content:center;font-size:5.4px;color:#606060;font-weight:normal;"><span style="display:inline-block;position:relative;top:1.8px;transform:scaleX(1.1);transform-origin:center center;">建筑</span></div><div class="a" style="left:238.25px;top:245.5px;width:0.5px;height:10.2px;background:#ececec"></div><div class="a t" style="left:297px;top:245.5px;width:30.5px;height:10.2px;justify-content:center;font-size:5.4px;color:#606060;font-weight:normal;"><span style="display:inline-block;position:relative;top:1.8px;transform:scaleX(1.1);transform-origin:center center;">4</span></div><div class="a" style="left:296.75px;top:245.5px;width:0.5px;height:10.2px;background:#ececec"></div><div class="a t" style="left:327.5px;top:245.5px;width:30.0px;height:10.2px;justify-content:center;font-size:5.4px;color:#606060;font-weight:normal;"><span style="display:inline-block;position:relative;top:1.8px;transform:scaleX(1.1);transform-origin:center center;">分部分项</span></div><div class="a" style="left:327.25px;top:245.5px;width:0.5px;height:10.2px;background:#ececec"></div><div class="a t" style="left:357.5px;top:245.5px;width:57.0px;height:10.2px;justify-content:center;font-size:5.4px;color:#606060;font-weight:normal;"><span style="display:inline-block;position:relative;top:1.8px;transform:scaleX(1.1);transform-origin:center center;">010401003001</span></div><div class="a" style="left:357.25px;top:245.5px;width:0.5px;height:10.2px;background:#ececec"></div><div class="a t" style="left:414.5px;top:245.5px;width:64.25px;height:10.2px;justify-content:center;font-size:5.4px;color:#606060;font-weight:normal;"><span style="display:inline-block;position:relative;top:1.8px;transform:scaleX(1.1);transform-origin:center center;">实心砖墙</span></div><div class="a" style="left:414.25px;top:245.5px;width:0.5px;height:10.2px;background:#ececec"></div><div class="a t" style="left:478.75px;top:245.5px;width:43.25px;height:10.2px;justify-content:center;font-size:5.4px;color:#606060;font-weight:normal;"><span style="display:inline-block;position:relative;top:1.8px;transform:scaleX(1.1);transform-origin:center center;">10</span></div><div class="a" style="left:478.5px;top:245.5px;width:0.5px;height:10.2px;background:#ececec"></div><div class="a t" style="left:522px;top:245.5px;width:43.5px;height:10.2px;justify-content:center;font-size:5.4px;color:#606060;font-weight:normal;"><span style="display:inline-block;position:relative;top:1.8px;transform:scaleX(1.1);transform-origin:center center;">10</span></div><div class="a" style="left:521.75px;top:245.5px;width:0.5px;height:10.2px;background:#ececec"></div><div class="a t" style="left:565.5px;top:245.5px;width:54.5px;height:10.2px;justify-content:center;font-size:5.4px;color:#606060;font-weight:normal;"><span style="display:inline-block;position:relative;top:1.8px;transform:scaleX(1.1);transform-origin:center center;">1</span></div><div class="a" style="left:565.25px;top:245.5px;width:0.5px;height:10.2px;background:#ececec"></div><div class="a t" style="left:620px;top:245.5px;width:56px;height:10.2px;justify-content:center;font-size:5.4px;color:#606060;font-weight:normal;"><span style="display:inline-block;position:relative;top:1.8px;transform:scaleX(1.1);transform-origin:center center;">1</span></div><div class="a" style="left:619.75px;top:245.5px;width:0.5px;height:10.2px;background:#ececec"></div><div class="a" style="left:671.3px;top:218.4px;width:3.4px;height:21.6px;background:#dcdcdc;border-radius:1px"></div><div class="a" style="left:567.8px;top:197.5px;width:104.2px;height:18.9px;border:1.3px solid #e8262a;border-radius:1.5px"></div><div class="a" style="left:121.3px;top:258.9px;width:534.6px;height:120px;background:#fff;border:0.7px solid #d4d8e0;box-shadow:0 0 2px rgba(0,0,0,0.08)"></div><div class="a" style="left:121.3px;top:258.9px;width:534.6px;height:11.8px;background:#d6ddeb"></div><div class="a t" style="left:131px;top:258.9px;width:60px;height:11.8px;justify-content:flex-start;font-size:5.3px;color:#4a4a4a;font-weight:500;"><span style="display:inline-block;position:relative;top:1.0px;transform:scaleX(1.52);transform-origin:left center;">雷同清单明细</span></div><div class="a" style="left:620.4px;top:264.6px;width:6.3px;height:0.8px;background:#9aa0ac"></div><svg class="a" style="left:629.6px;top:263px" width="6.7" height="3.6" viewBox="0 0 6.7 3.6"><rect x="0.45" y="0.45" width="5.8" height="2.7" fill="none" stroke="#9aa0ac" stroke-width="0.9" rx="0.4"/></svg><svg class="a" style="left:639.6px;top:263px" width="5.4" height="3.6" viewBox="0 0 5.4 3.6"><path d="M0.4 0.3L5 3.3M5 0.3L0.4 3.3" stroke="#9aa0ac" stroke-width="0.8"/></svg><svg class="a" style="left:328.8px;top:275px" width="6.6" height="6.6" viewBox="0 0 10 10"><path d="M1 1.2H5.6V3.4H9V9H1Z M5.6 3.4V9" fill="none" stroke="#6090f4" stroke-width="1.5"/></svg><div class="a t" style="left:340.8px;top:272.5px;width:40px;height:12px;justify-content:flex-start;font-size:5.3px;color:#555;font-weight:normal;"><span style="display:inline-block;position:relative;top:1.0px;transform:scaleX(1.4);transform-origin:left center;">投标单位1</span></div><svg class="a" style="left:379.8px;top:273.8px" width="16.7" height="9.2" viewBox="0 0 20 16" preserveAspectRatio="none"><ellipse cx="10" cy="8" rx="9.5" ry="7.8" fill="#f39a26"/><text x="10" y="11.6" font-size="10.5" font-style="italic" font-weight="bold" text-anchor="middle" fill="#fff" font-family="Liberation Sans" letter-spacing="-0.8">VS</text></svg><svg class="a" style="left:402px;top:275px" width="6.6" height="6.6" viewBox="0 0 10 10"><path d="M1 1.2H5.6V3.4H9V9H1Z M5.6 3.4V9" fill="none" stroke="#6090f4" stroke-width="1.5"/></svg><div class="a t" style="left:414.2px;top:272.5px;width:40px;height:12px;justify-content:flex-start;font-size:5.3px;color:#555;font-weight:normal;"><span style="display:inline-block;position:relative;top:1.0px;transform:scaleX(1.4);transform-origin:left center;">投标单位3</span></div><div class="a" style="left:126.3px;top:286.4px;width:524px;height:9.7px;background:#e8e9ee;border-bottom:0.7px solid #cfd2d8"></div><div class="a t" style="left:126.3px;top:286.4px;width:17.89999999999999px;height:9.7px;justify-content:center;font-size:4.2px;color:#555;font-weight:bold;"><span style="display:inline-block;position:relative;top:0.9px;transform:scaleX(1.55);transform-origin:center center;">序号</span></div><div class="a t" style="left:144.2px;top:286.4px;width:67.10000000000002px;height:9.7px;justify-content:center;font-size:4.2px;color:#555;font-weight:bold;"><span style="display:inline-block;position:relative;top:0.9px;transform:scaleX(1.55);transform-origin:center center;">单项工程</span></div><div class="a" style="left:143.85px;top:286.4px;width:0.7px;height:9.7px;background:#d6d8de"></div><div class="a t" style="left:211.3px;top:286.4px;width:66.69999999999999px;height:9.7px;justify-content:center;font-size:4.2px;color:#555;font-weight:bold;"><span style="display:inline-block;position:relative;top:0.9px;transform:scaleX(1.55);transform-origin:center center;">专业工程</span></div><div class="a" style="left:210.95000000000002px;top:286.4px;width:0.7px;height:9.7px;background:#d6d8de"></div><div class="a t" style="left:278px;top:286.4px;width:35.75px;height:9.7px;justify-content:center;font-size:4.2px;color:#555;font-weight:bold;"><span style="display:inline-block;position:relative;top:0.9px;transform:scaleX(1.55);transform-origin:center center;">清单序号</span></div><div class="a" style="left:277.65px;top:286.4px;width:0.7px;height:9.7px;background:#d6d8de"></div><div class="a t" style="left:313.75px;top:286.4px;width:35.0px;height:9.7px;justify-content:center;font-size:4.2px;color:#555;font-weight:bold;"><span style="display:inline-block;position:relative;top:0.9px;transform:scaleX(1.55);transform-origin:center center;">清单来源</span></div><div class="a" style="left:313.4px;top:286.4px;width:0.7px;height:9.7px;background:#d6d8de"></div><div class="a t" style="left:348.75px;top:286.4px;width:65.0px;height:9.7px;justify-content:center;font-size:4.2px;color:#555;font-weight:bold;"><span style="display:inline-block;position:relative;top:0.9px;transform:scaleX(1.55);transform-origin:center center;">清单编码</span></div><div class="a" style="left:348.4px;top:286.4px;width:0.7px;height:9.7px;background:#d6d8de"></div><div class="a t" style="left:413.75px;top:286.4px;width:73.75px;height:9.7px;justify-content:center;font-size:4.2px;color:#555;font-weight:bold;"><span style="display:inline-block;position:relative;top:0.9px;transform:scaleX(1.55);transform-origin:center center;">清单名称</span></div><div class="a" style="left:413.4px;top:286.4px;width:0.7px;height:9.7px;background:#d6d8de"></div><div class="a t" style="left:487.5px;top:286.4px;width:50.0px;height:9.7px;justify-content:center;font-size:4.2px;color:#555;font-weight:bold;"><span style="display:inline-block;position:relative;top:0.9px;transform:scaleX(1.55);transform-origin:center center;">A单价</span></div><div class="a" style="left:487.15px;top:286.4px;width:0.7px;height:9.7px;background:#d6d8de"></div><div class="a t" style="left:537.5px;top:286.4px;width:50.0px;height:9.7px;justify-content:center;font-size:4.2px;color:#555;font-weight:bold;"><span style="display:inline-block;position:relative;top:0.9px;transform:scaleX(1.55);transform-origin:center center;">B单价</span></div><div class="a" style="left:537.15px;top:286.4px;width:0.7px;height:9.7px;background:#d6d8de"></div><div class="a t" style="left:587.5px;top:286.4px;width:62.799999999999955px;height:9.7px;justify-content:center;font-size:4.2px;color:#555;font-weight:bold;"><span style="display:inline-block;position:relative;top:0.9px;transform:scaleX(1.55);transform-origin:center center;">|A-B|</span></div><div class="a" style="left:587.15px;top:286.4px;width:0.7px;height:9.7px;background:#d6d8de"></div><div class="a" style="left:126.3px;top:296.09999999999997px;width:524px;height:8.27px;background:#e9f3fc"></div><div class="a" style="left:126.3px;top:296.09999999999997px;width:17.9px;height:8.27px;background:#c6d6f4"></div><div class="a" style="left:126.3px;top:303.86999999999995px;width:524px;height:0.5px;background:#ececec"></div><div class="a t" style="left:126.3px;top:296.09999999999997px;width:17.89999999999999px;height:8.27px;justify-content:center;font-size:4.5px;color:#7a7a7a;font-weight:normal;"><span style="display:inline-block;position:relative;top:1.6px;transform:scaleX(1.45);transform-origin:center center;">1</span></div><div class="a t" style="left:147.7px;top:296.09999999999997px;width:67.10000000000002px;height:8.27px;justify-content:flex-start;font-size:4.5px;color:#7a7a7a;font-weight:normal;"><span style="display:inline-block;position:relative;top:1.6px;transform:scaleX(1.55);transform-origin:left center;">吉县新华城中村—A...</span></div><div class="a" style="left:143.95px;top:296.09999999999997px;width:0.5px;height:8.27px;background:#ececec"></div><div class="a t" style="left:211.3px;top:296.09999999999997px;width:66.69999999999999px;height:8.27px;justify-content:center;font-size:4.5px;color:#7a7a7a;font-weight:normal;"><span style="display:inline-block;position:relative;top:1.6px;transform:scaleX(1.45);transform-origin:center center;">建筑</span></div><div class="a" style="left:211.05px;top:296.09999999999997px;width:0.5px;height:8.27px;background:#ececec"></div><div class="a t" style="left:278px;top:296.09999999999997px;width:35.75px;height:8.27px;justify-content:center;font-size:4.5px;color:#7a7a7a;font-weight:normal;"><span style="display:inline-block;position:relative;top:1.6px;transform:scaleX(1.45);transform-origin:center center;">1</span></div><div class="a" style="left:277.75px;top:296.09999999999997px;width:0.5px;height:8.27px;background:#ececec"></div><div class="a t" style="left:313.75px;top:296.09999999999997px;width:35.0px;height:8.27px;justify-content:center;font-size:4.5px;color:#7a7a7a;font-weight:normal;"><span style="display:inline-block;position:relative;top:1.6px;transform:scaleX(1.45);transform-origin:center center;">分部分项</span></div><div class="a" style="left:313.5px;top:296.09999999999997px;width:0.5px;height:8.27px;background:#ececec"></div><div class="a t" style="left:348.75px;top:296.09999999999997px;width:65.0px;height:8.27px;justify-content:center;font-size:4.5px;color:#7a7a7a;font-weight:normal;"><span style="display:inline-block;position:relative;top:1.6px;transform:scaleX(1.45);transform-origin:center center;">010103001001</span></div><div class="a" style="left:348.5px;top:296.09999999999997px;width:0.5px;height:8.27px;background:#ececec"></div><div class="a t" style="left:413.75px;top:296.09999999999997px;width:73.75px;height:8.27px;justify-content:center;font-size:4.5px;color:#7a7a7a;font-weight:normal;"><span style="display:inline-block;position:relative;top:1.6px;transform:scaleX(1.45);transform-origin:center center;">回填方</span></div><div class="a" style="left:413.5px;top:296.09999999999997px;width:0.5px;height:8.27px;background:#ececec"></div><div class="a t" style="left:487.5px;top:296.09999999999997px;width:50.0px;height:8.27px;justify-content:center;font-size:4.5px;color:#7a7a7a;font-weight:normal;"><span style="display:inline-block;position:relative;top:1.6px;transform:scaleX(1.45);transform-origin:center center;">10</span></div><div class="a" style="left:487.25px;top:296.09999999999997px;width:0.5px;height:8.27px;background:#ececec"></div><div class="a t" style="left:537.5px;top:296.09999999999997px;width:50.0px;height:8.27px;justify-content:center;font-size:4.5px;color:#7a7a7a;font-weight:normal;"><span style="display:inline-block;position:relative;top:1.6px;transform:scaleX(1.45);transform-origin:center center;">10</span></div><div class="a" style="left:537.25px;top:296.09999999999997px;width:0.5px;height:8.27px;background:#ececec"></div><div class="a t" style="left:587.5px;top:296.09999999999997px;width:62.799999999999955px;height:8.27px;justify-content:center;font-size:4.5px;color:#7a7a7a;font-weight:normal;"><span style="display:inline-block;position:relative;top:1.6px;transform:scaleX(1.45);transform-origin:center center;">0</span></div><div class="a" style="left:587.25px;top:296.09999999999997px;width:0.5px;height:8.27px;background:#ececec"></div><div class="a" style="left:126.3px;top:312.13999999999993px;width:524px;height:0.5px;background:#ececec"></div><div class="a t" style="left:126.3px;top:304.36999999999995px;width:17.89999999999999px;height:8.27px;justify-content:center;font-size:4.5px;color:#7a7a7a;font-weight:normal;"><span style="display:inline-block;position:relative;top:1.6px;transform:scaleX(1.45);transform-origin:center center;">2</span></div><div class="a t" style="left:147.7px;top:304.36999999999995px;width:67.10000000000002px;height:8.27px;justify-content:flex-start;font-size:4.5px;color:#7a7a7a;font-weight:normal;"><span style="display:inline-block;position:relative;top:1.6px;transform:scaleX(1.55);transform-origin:left center;">吉县新华城中村—A...</span></div><div class="a" style="left:143.95px;top:304.36999999999995px;width:0.5px;height:8.27px;background:#ececec"></div><div class="a t" style="left:211.3px;top:304.36999999999995px;width:66.69999999999999px;height:8.27px;justify-content:center;font-size:4.5px;color:#7a7a7a;font-weight:normal;"><span style="display:inline-block;position:relative;top:1.6px;transform:scaleX(1.45);transform-origin:center center;">建筑</span></div><div class="a" style="left:211.05px;top:304.36999999999995px;width:0.5px;height:8.27px;background:#ececec"></div><div class="a t" style="left:278px;top:304.36999999999995px;width:35.75px;height:8.27px;justify-content:center;font-size:4.5px;color:#7a7a7a;font-weight:normal;"><span style="display:inline-block;position:relative;top:1.6px;transform:scaleX(1.45);transform-origin:center center;">2</span></div><div class="a" style="left:277.75px;top:304.36999999999995px;width:0.5px;height:8.27px;background:#ececec"></div><div class="a t" style="left:313.75px;top:304.36999999999995px;width:35.0px;height:8.27px;justify-content:center;font-size:4.5px;color:#7a7a7a;font-weight:normal;"><span style="display:inline-block;position:relative;top:1.6px;transform:scaleX(1.45);transform-origin:center center;">分部分项</span></div><div class="a" style="left:313.5px;top:304.36999999999995px;width:0.5px;height:8.27px;background:#ececec"></div><div class="a t" style="left:348.75px;top:304.36999999999995px;width:65.0px;height:8.27px;justify-content:center;font-size:4.5px;color:#7a7a7a;font-weight:normal;"><span style="display:inline-block;position:relative;top:1.6px;transform:scaleX(1.45);transform-origin:center center;">010103001002</span></div><div class="a" style="left:348.5px;top:304.36999999999995px;width:0.5px;height:8.27px;background:#ececec"></div><div class="a t" style="left:413.75px;top:304.36999999999995px;width:73.75px;height:8.27px;justify-content:center;font-size:4.5px;color:#7a7a7a;font-weight:normal;"><span style="display:inline-block;position:relative;top:1.6px;transform:scaleX(1.45);transform-origin:center center;">回填方</span></div><div class="a" style="left:413.5px;top:304.36999999999995px;width:0.5px;height:8.27px;background:#ececec"></div><div class="a t" style="left:487.5px;top:304.36999999999995px;width:50.0px;height:8.27px;justify-content:center;font-size:4.5px;color:#7a7a7a;font-weight:normal;"><span style="display:inline-block;position:relative;top:1.6px;transform:scaleX(1.45);transform-origin:center center;">10</span></div><div class="a" style="left:487.25px;top:304.36999999999995px;width:0.5px;height:8.27px;background:#ececec"></div><div class="a t" style="left:537.5px;top:304.36999999999995px;width:50.0px;height:8.27px;justify-content:center;font-size:4.5px;color:#7a7a7a;font-weight:normal;"><span style="display:inline-block;position:relative;top:1.6px;transform:scaleX(1.45);transform-origin:center center;">10</span></div><div class="a" style="left:537.25px;top:304.36999999999995px;width:0.5px;height:8.27px;background:#ececec"></div><div class="a t" style="left:587.5px;top:304.36999999999995px;width:62.799999999999955px;height:8.27px;justify-content:center;font-size:4.5px;color:#7a7a7a;font-weight:normal;"><span style="display:inline-block;position:relative;top:1.6px;transform:scaleX(1.45);transform-origin:center center;">0</span></div><div class="a" style="left:587.25px;top:304.36999999999995px;width:0.5px;height:8.27px;background:#ececec"></div><div class="a" style="left:126.3px;top:320.40999999999997px;width:524px;height:0.5px;background:#ececec"></div><div class="a t" style="left:126.3px;top:312.64px;width:17.89999999999999px;height:8.27px;justify-content:center;font-size:4.5px;color:#7a7a7a;font-weight:normal;"><span style="display:inline-block;position:relative;top:1.6px;transform:scaleX(1.45);transform-origin:center center;">3</span></div><div class="a t" style="left:147.7px;top:312.64px;width:67.10000000000002px;height:8.27px;justify-content:flex-start;font-size:4.5px;color:#7a7a7a;font-weight:normal;"><span style="display:inline-block;position:relative;top:1.6px;transform:scaleX(1.55);transform-origin:left center;">吉县新华城中村—A...</span></div><div class="a" style="left:143.95px;top:312.64px;width:0.5px;height:8.27px;background:#ececec"></div><div class="a t" style="left:211.3px;top:312.64px;width:66.69999999999999px;height:8.27px;justify-content:center;font-size:4.5px;color:#7a7a7a;font-weight:normal;"><span style="display:inline-block;position:relative;top:1.6px;transform:scaleX(1.45);transform-origin:center center;">建筑</span></div><div class="a" style="left:211.05px;top:312.64px;width:0.5px;height:8.27px;background:#ececec"></div><div class="a t" style="left:278px;top:312.64px;width:35.75px;height:8.27px;justify-content:center;font-size:4.5px;color:#7a7a7a;font-weight:normal;"><span style="display:inline-block;position:relative;top:1.6px;transform:scaleX(1.45);transform-origin:center center;">3</span></div><div class="a" style="left:277.75px;top:312.64px;width:0.5px;height:8.27px;background:#ececec"></div><div class="a t" style="left:313.75px;top:312.64px;width:35.0px;height:8.27px;justify-content:center;font-size:4.5px;color:#7a7a7a;font-weight:normal;"><span style="display:inline-block;position:relative;top:1.6px;transform:scaleX(1.45);transform-origin:center center;">分部分项</span></div><div class="a" style="left:313.5px;top:312.64px;width:0.5px;height:8.27px;background:#ececec"></div><div class="a t" style="left:348.75px;top:312.64px;width:65.0px;height:8.27px;justify-content:center;font-size:4.5px;color:#7a7a7a;font-weight:normal;"><span style="display:inline-block;position:relative;top:1.6px;transform:scaleX(1.45);transform-origin:center center;">010103002001</span></div><div class="a" style="left:348.5px;top:312.64px;width:0.5px;height:8.27px;background:#ececec"></div><div class="a t" style="left:413.75px;top:312.64px;width:73.75px;height:8.27px;justify-content:center;font-size:4.5px;color:#7a7a7a;font-weight:normal;"><span style="display:inline-block;position:relative;top:1.6px;transform:scaleX(1.45);transform-origin:center center;">余方弃置</span></div><div class="a" style="left:413.5px;top:312.64px;width:0.5px;height:8.27px;background:#ececec"></div><div class="a t" style="left:487.5px;top:312.64px;width:50.0px;height:8.27px;justify-content:center;font-size:4.5px;color:#7a7a7a;font-weight:normal;"><span style="display:inline-block;position:relative;top:1.6px;transform:scaleX(1.45);transform-origin:center center;">10</span></div><div class="a" style="left:487.25px;top:312.64px;width:0.5px;height:8.27px;background:#ececec"></div><div class="a t" style="left:537.5px;top:312.64px;width:50.0px;height:8.27px;justify-content:center;font-size:4.5px;color:#7a7a7a;font-weight:normal;"><span style="display:inline-block;position:relative;top:1.6px;transform:scaleX(1.45);transform-origin:center center;">10</span></div><div class="a" style="left:537.25px;top:312.64px;width:0.5px;height:8.27px;background:#ececec"></div><div class="a t" style="left:587.5px;top:312.64px;width:62.799999999999955px;height:8.27px;justify-content:center;font-size:4.5px;color:#7a7a7a;font-weight:normal;"><span style="display:inline-block;position:relative;top:1.6px;transform:scaleX(1.45);transform-origin:center center;">0</span></div><div class="a" style="left:587.25px;top:312.64px;width:0.5px;height:8.27px;background:#ececec"></div><div class="a" style="left:126.3px;top:328.67999999999995px;width:524px;height:0.5px;background:#ececec"></div><div class="a t" style="left:126.3px;top:320.90999999999997px;width:17.89999999999999px;height:8.27px;justify-content:center;font-size:4.5px;color:#7a7a7a;font-weight:normal;"><span style="display:inline-block;position:relative;top:1.6px;transform:scaleX(1.45);transform-origin:center center;">4</span></div><div class="a t" style="left:147.7px;top:320.90999999999997px;width:67.10000000000002px;height:8.27px;justify-content:flex-start;font-size:4.5px;color:#7a7a7a;font-weight:normal;"><span style="display:inline-block;position:relative;top:1.6px;transform:scaleX(1.55);transform-origin:left center;">吉县新华城中村—A...</span></div><div class="a" style="left:143.95px;top:320.90999999999997px;width:0.5px;height:8.27px;background:#ececec"></div><div class="a t" style="left:211.3px;top:320.90999999999997px;width:66.69999999999999px;height:8.27px;justify-content:center;font-size:4.5px;color:#7a7a7a;font-weight:normal;"><span style="display:inline-block;position:relative;top:1.6px;transform:scaleX(1.45);transform-origin:center center;">建筑</span></div><div class="a" style="left:211.05px;top:320.90999999999997px;width:0.5px;height:8.27px;background:#ececec"></div><div class="a t" style="left:278px;top:320.90999999999997px;width:35.75px;height:8.27px;justify-content:center;font-size:4.5px;color:#7a7a7a;font-weight:normal;"><span style="display:inline-block;position:relative;top:1.6px;transform:scaleX(1.45);transform-origin:center center;">4</span></div><div class="a" style="left:277.75px;top:320.90999999999997px;width:0.5px;height:8.27px;background:#ececec"></div><div class="a t" style="left:313.75px;top:320.90999999999997px;width:35.0px;height:8.27px;justify-content:center;font-size:4.5px;color:#7a7a7a;font-weight:normal;"><span style="display:inline-block;position:relative;top:1.6px;transform:scaleX(1.45);transform-origin:center center;">分部分项</span></div><div class="a" style="left:313.5px;top:320.90999999999997px;width:0.5px;height:8.27px;background:#ececec"></div><div class="a t" style="left:348.75px;top:320.90999999999997px;width:65.0px;height:8.27px;justify-content:center;font-size:4.5px;color:#7a7a7a;font-weight:normal;"><span style="display:inline-block;position:relative;top:1.6px;transform:scaleX(1.45);transform-origin:center center;">010401003001</span></div><div class="a" style="left:348.5px;top:320.90999999999997px;width:0.5px;height:8.27px;background:#ececec"></div><div class="a t" style="left:413.75px;top:320.90999999999997px;width:73.75px;height:8.27px;justify-content:center;font-size:4.5px;color:#7a7a7a;font-weight:normal;"><span style="display:inline-block;position:relative;top:1.6px;transform:scaleX(1.45);transform-origin:center center;">实心砖墙</span></div><div class="a" style="left:413.5px;top:320.90999999999997px;width:0.5px;height:8.27px;background:#ececec"></div><div class="a t" style="left:487.5px;top:320.90999999999997px;width:50.0px;height:8.27px;justify-content:center;font-size:4.5px;color:#7a7a7a;font-weight:normal;"><span style="display:inline-block;position:relative;top:1.6px;transform:scaleX(1.45);transform-origin:center center;">10</span></div><div class="a" style="left:487.25px;top:320.90999999999997px;width:0.5px;height:8.27px;background:#ececec"></div><div class="a t" style="left:537.5px;top:320.90999999999997px;width:50.0px;height:8.27px;justify-content:center;font-size:4.5px;color:#7a7a7a;font-weight:normal;"><span style="display:inline-block;position:relative;top:1.6px;transform:scaleX(1.45);transform-origin:center center;">10</span></div><div class="a" style="left:537.25px;top:320.90999999999997px;width:0.5px;height:8.27px;background:#ececec"></div><div class="a t" style="left:587.5px;top:320.90999999999997px;width:62.799999999999955px;height:8.27px;justify-content:center;font-size:4.5px;color:#7a7a7a;font-weight:normal;"><span style="display:inline-block;position:relative;top:1.6px;transform:scaleX(1.45);transform-origin:center center;">0</span></div><div class="a" style="left:587.25px;top:320.90999999999997px;width:0.5px;height:8.27px;background:#ececec"></div><div class="a" style="left:126.3px;top:336.94999999999993px;width:524px;height:0.5px;background:#ececec"></div><div class="a t" style="left:126.3px;top:329.17999999999995px;width:17.89999999999999px;height:8.27px;justify-content:center;font-size:4.5px;color:#7a7a7a;font-weight:normal;"><span style="display:inline-block;position:relative;top:1.6px;transform:scaleX(1.45);transform-origin:center center;">5</span></div><div class="a t" style="left:147.7px;top:329.17999999999995px;width:67.10000000000002px;height:8.27px;justify-content:flex-start;font-size:4.5px;color:#7a7a7a;font-weight:normal;"><span style="display:inline-block;position:relative;top:1.6px;transform:scaleX(1.55);transform-origin:left center;">吉县新华城中村—A...</span></div><div class="a" style="left:143.95px;top:329.17999999999995px;width:0.5px;height:8.27px;background:#ececec"></div><div class="a t" style="left:211.3px;top:329.17999999999995px;width:66.69999999999999px;height:8.27px;justify-content:center;font-size:4.5px;color:#7a7a7a;font-weight:normal;"><span style="display:inline-block;position:relative;top:1.6px;transform:scaleX(1.45);transform-origin:center center;">建筑</span></div><div class="a" style="left:211.05px;top:329.17999999999995px;width:0.5px;height:8.27px;background:#ececec"></div><div class="a t" style="left:278px;top:329.17999999999995px;width:35.75px;height:8.27px;justify-content:center;font-size:4.5px;color:#7a7a7a;font-weight:normal;"><span style="display:inline-block;position:relative;top:1.6px;transform:scaleX(1.45);transform-origin:center center;">5</span></div><div class="a" style="left:277.75px;top:329.17999999999995px;width:0.5px;height:8.27px;background:#ececec"></div><div class="a t" style="left:313.75px;top:329.17999999999995px;width:35.0px;height:8.27px;justify-content:center;font-size:4.5px;color:#7a7a7a;font-weight:normal;"><span style="display:inline-block;position:relative;top:1.6px;transform:scaleX(1.45);transform-origin:center center;">分部分项</span></div><div class="a" style="left:313.5px;top:329.17999999999995px;width:0.5px;height:8.27px;background:#ececec"></div><div class="a t" style="left:348.75px;top:329.17999999999995px;width:65.0px;height:8.27px;justify-content:center;font-size:4.5px;color:#7a7a7a;font-weight:normal;"><span style="display:inline-block;position:relative;top:1.6px;transform:scaleX(1.45);transform-origin:center center;">010401012001</span></div><div class="a" style="left:348.5px;top:329.17999999999995px;width:0.5px;height:8.27px;background:#ececec"></div><div class="a t" style="left:413.75px;top:329.17999999999995px;width:73.75px;height:8.27px;justify-content:center;font-size:4.5px;color:#7a7a7a;font-weight:normal;"><span style="display:inline-block;position:relative;top:1.6px;transform:scaleX(1.45);transform-origin:center center;">零星砌砖</span></div><div class="a" style="left:413.5px;top:329.17999999999995px;width:0.5px;height:8.27px;background:#ececec"></div><div class="a t" style="left:487.5px;top:329.17999999999995px;width:50.0px;height:8.27px;justify-content:center;font-size:4.5px;color:#7a7a7a;font-weight:normal;"><span style="display:inline-block;position:relative;top:1.6px;transform:scaleX(1.45);transform-origin:center center;">10</span></div><div class="a" style="left:487.25px;top:329.17999999999995px;width:0.5px;height:8.27px;background:#ececec"></div><div class="a t" style="left:537.5px;top:329.17999999999995px;width:50.0px;height:8.27px;justify-content:center;font-size:4.5px;color:#7a7a7a;font-weight:normal;"><span style="display:inline-block;position:relative;top:1.6px;transform:scaleX(1.45);transform-origin:center center;">10</span></div><div class="a" style="left:537.25px;top:329.17999999999995px;width:0.5px;height:8.27px;background:#ececec"></div><div class="a t" style="left:587.5px;top:329.17999999999995px;width:62.799999999999955px;height:8.27px;justify-content:center;font-size:4.5px;color:#7a7a7a;font-weight:normal;"><span style="display:inline-block;position:relative;top:1.6px;transform:scaleX(1.45);transform-origin:center center;">0</span></div><div class="a" style="left:587.25px;top:329.17999999999995px;width:0.5px;height:8.27px;background:#ececec"></div><div class="a" style="left:126.3px;top:345.2199999999999px;width:524px;height:0.5px;background:#ececec"></div><div class="a t" style="left:126.3px;top:337.44999999999993px;width:17.89999999999999px;height:8.27px;justify-content:center;font-size:4.5px;color:#7a7a7a;font-weight:normal;"><span style="display:inline-block;position:relative;top:1.6px;transform:scaleX(1.45);transform-origin:center center;">6</span></div><div class="a t" style="left:147.7px;top:337.44999999999993px;width:67.10000000000002px;height:8.27px;justify-content:flex-start;font-size:4.5px;color:#7a7a7a;font-weight:normal;"><span style="display:inline-block;position:relative;top:1.6px;transform:scaleX(1.55);transform-origin:left center;">吉县新华城中村—A...</span></div><div class="a" style="left:143.95px;top:337.44999999999993px;width:0.5px;height:8.27px;background:#ececec"></div><div class="a t" style="left:211.3px;top:337.44999999999993px;width:66.69999999999999px;height:8.27px;justify-content:center;font-size:4.5px;color:#7a7a7a;font-weight:normal;"><span style="display:inline-block;position:relative;top:1.6px;transform:scaleX(1.45);transform-origin:center center;">建筑</span></div><div class="a" style="left:211.05px;top:337.44999999999993px;width:0.5px;height:8.27px;background:#ececec"></div><div class="a t" style="left:278px;top:337.44999999999993px;width:35.75px;height:8.27px;justify-content:center;font-size:4.5px;color:#7a7a7a;font-weight:normal;"><span style="display:inline-block;position:relative;top:1.6px;transform:scaleX(1.45);transform-origin:center center;">6</span></div><div class="a" style="left:277.75px;top:337.44999999999993px;width:0.5px;height:8.27px;background:#ececec"></div><div class="a t" style="left:313.75px;top:337.44999999999993px;width:35.0px;height:8.27px;justify-content:center;font-size:4.5px;color:#7a7a7a;font-weight:normal;"><span style="display:inline-block;position:relative;top:1.6px;transform:scaleX(1.45);transform-origin:center center;">分部分项</span></div><div class="a" style="left:313.5px;top:337.44999999999993px;width:0.5px;height:8.27px;background:#ececec"></div><div class="a t" style="left:348.75px;top:337.44999999999993px;width:65.0px;height:8.27px;justify-content:center;font-size:4.5px;color:#7a7a7a;font-weight:normal;"><span style="display:inline-block;position:relative;top:1.6px;transform:scaleX(1.45);transform-origin:center center;">010402001001</span></div><div class="a" style="left:348.5px;top:337.44999999999993px;width:0.5px;height:8.27px;background:#ececec"></div><div class="a t" style="left:413.75px;top:337.44999999999993px;width:73.75px;height:8.27px;justify-content:center;font-size:4.5px;color:#7a7a7a;font-weight:normal;"><span style="display:inline-block;position:relative;top:1.6px;transform:scaleX(1.45);transform-origin:center center;">砌块墙</span></div><div class="a" style="left:413.5px;top:337.44999999999993px;width:0.5px;height:8.27px;background:#ececec"></div><div class="a t" style="left:487.5px;top:337.44999999999993px;width:50.0px;height:8.27px;justify-content:center;font-size:4.5px;color:#7a7a7a;font-weight:normal;"><span style="display:inline-block;position:relative;top:1.6px;transform:scaleX(1.45);transform-origin:center center;">10</span></div><div class="a" style="left:487.25px;top:337.44999999999993px;width:0.5px;height:8.27px;background:#ececec"></div><div class="a t" style="left:537.5px;top:337.44999999999993px;width:50.0px;height:8.27px;justify-content:center;font-size:4.5px;color:#7a7a7a;font-weight:normal;"><span style="display:inline-block;position:relative;top:1.6px;transform:scaleX(1.45);transform-origin:center center;">10</span></div><div class="a" style="left:537.25px;top:337.44999999999993px;width:0.5px;height:8.27px;background:#ececec"></div><div class="a t" style="left:587.5px;top:337.44999999999993px;width:62.799999999999955px;height:8.27px;justify-content:center;font-size:4.5px;color:#7a7a7a;font-weight:normal;"><span style="display:inline-block;position:relative;top:1.6px;transform:scaleX(1.45);transform-origin:center center;">0</span></div><div class="a" style="left:587.25px;top:337.44999999999993px;width:0.5px;height:8.27px;background:#ececec"></div><div class="a" style="left:126.3px;top:353.48999999999995px;width:524px;height:0.5px;background:#ececec"></div><div class="a t" style="left:126.3px;top:345.71999999999997px;width:17.89999999999999px;height:8.27px;justify-content:center;font-size:4.5px;color:#7a7a7a;font-weight:normal;"><span style="display:inline-block;position:relative;top:1.6px;transform:scaleX(1.45);transform-origin:center center;">7</span></div><div class="a t" style="left:147.7px;top:345.71999999999997px;width:67.10000000000002px;height:8.27px;justify-content:flex-start;font-size:4.5px;color:#7a7a7a;font-weight:normal;"><span style="display:inline-block;position:relative;top:1.6px;transform:scaleX(1.55);transform-origin:left center;">吉县新华城中村—A...</span></div><div class="a" style="left:143.95px;top:345.71999999999997px;width:0.5px;height:8.27px;background:#ececec"></div><div class="a t" style="left:211.3px;top:345.71999999999997px;width:66.69999999999999px;height:8.27px;justify-content:center;font-size:4.5px;color:#7a7a7a;font-weight:normal;"><span style="display:inline-block;position:relative;top:1.6px;transform:scaleX(1.45);transform-origin:center center;">建筑</span></div><div class="a" style="left:211.05px;top:345.71999999999997px;width:0.5px;height:8.27px;background:#ececec"></div><div class="a t" style="left:278px;top:345.71999999999997px;width:35.75px;height:8.27px;justify-content:center;font-size:4.5px;color:#7a7a7a;font-weight:normal;"><span style="display:inline-block;position:relative;top:1.6px;transform:scaleX(1.45);transform-origin:center center;">7</span></div><div class="a" style="left:277.75px;top:345.71999999999997px;width:0.5px;height:8.27px;background:#ececec"></div><div class="a t" style="left:313.75px;top:345.71999999999997px;width:35.0px;height:8.27px;justify-content:center;font-size:4.5px;color:#7a7a7a;font-weight:normal;"><span style="display:inline-block;position:relative;top:1.6px;transform:scaleX(1.45);transform-origin:center center;">分部分项</span></div><div class="a" style="left:313.5px;top:345.71999999999997px;width:0.5px;height:8.27px;background:#ececec"></div><div class="a t" style="left:348.75px;top:345.71999999999997px;width:65.0px;height:8.27px;justify-content:center;font-size:4.5px;color:#7a7a7a;font-weight:normal;"><span style="display:inline-block;position:relative;top:1.6px;transform:scaleX(1.45);transform-origin:center center;">010402001002</span></div><div class="a" style="left:348.5px;top:345.71999999999997px;width:0.5px;height:8.27px;background:#ececec"></div><div class="a t" style="left:413.75px;top:345.71999999999997px;width:73.75px;height:8.27px;justify-content:center;font-size:4.5px;color:#7a7a7a;font-weight:normal;"><span style="display:inline-block;position:relative;top:1.6px;transform:scaleX(1.45);transform-origin:center center;">砌块墙</span></div><div class="a" style="left:413.5px;top:345.71999999999997px;width:0.5px;height:8.27px;background:#ececec"></div><div class="a t" style="left:487.5px;top:345.71999999999997px;width:50.0px;height:8.27px;justify-content:center;font-size:4.5px;color:#7a7a7a;font-weight:normal;"><span style="display:inline-block;position:relative;top:1.6px;transform:scaleX(1.45);transform-origin:center center;">10</span></div><div class="a" style="left:487.25px;top:345.71999999999997px;width:0.5px;height:8.27px;background:#ececec"></div><div class="a t" style="left:537.5px;top:345.71999999999997px;width:50.0px;height:8.27px;justify-content:center;font-size:4.5px;color:#7a7a7a;font-weight:normal;"><span style="display:inline-block;position:relative;top:1.6px;transform:scaleX(1.45);transform-origin:center center;">10</span></div><div class="a" style="left:537.25px;top:345.71999999999997px;width:0.5px;height:8.27px;background:#ececec"></div><div class="a t" style="left:587.5px;top:345.71999999999997px;width:62.799999999999955px;height:8.27px;justify-content:center;font-size:4.5px;color:#7a7a7a;font-weight:normal;"><span style="display:inline-block;position:relative;top:1.6px;transform:scaleX(1.45);transform-origin:center center;">0</span></div><div class="a" style="left:587.25px;top:345.71999999999997px;width:0.5px;height:8.27px;background:#ececec"></div><div class="a" style="left:126.3px;top:361.75999999999993px;width:524px;height:0.5px;background:#ececec"></div><div class="a t" style="left:126.3px;top:353.98999999999995px;width:17.89999999999999px;height:8.27px;justify-content:center;font-size:4.5px;color:#7a7a7a;font-weight:normal;"><span style="display:inline-block;position:relative;top:1.6px;transform:scaleX(1.45);transform-origin:center center;">8</span></div><div class="a t" style="left:147.7px;top:353.98999999999995px;width:67.10000000000002px;height:8.27px;justify-content:flex-start;font-size:4.5px;color:#7a7a7a;font-weight:normal;"><span style="display:inline-block;position:relative;top:1.6px;transform:scaleX(1.55);transform-origin:left center;">吉县新华城中村—A...</span></div><div class="a" style="left:143.95px;top:353.98999999999995px;width:0.5px;height:8.27px;background:#ececec"></div><div class="a t" style="left:211.3px;top:353.98999999999995px;width:66.69999999999999px;height:8.27px;justify-content:center;font-size:4.5px;color:#7a7a7a;font-weight:normal;"><span style="display:inline-block;position:relative;top:1.6px;transform:scaleX(1.45);transform-origin:center center;">建筑</span></div><div class="a" style="left:211.05px;top:353.98999999999995px;width:0.5px;height:8.27px;background:#ececec"></div><div class="a t" style="left:278px;top:353.98999999999995px;width:35.75px;height:8.27px;justify-content:center;font-size:4.5px;color:#7a7a7a;font-weight:normal;"><span style="display:inline-block;position:relative;top:1.6px;transform:scaleX(1.45);transform-origin:center center;">8</span></div><div class="a" style="left:277.75px;top:353.98999999999995px;width:0.5px;height:8.27px;background:#ececec"></div><div class="a t" style="left:313.75px;top:353.98999999999995px;width:35.0px;height:8.27px;justify-content:center;font-size:4.5px;color:#7a7a7a;font-weight:normal;"><span style="display:inline-block;position:relative;top:1.6px;transform:scaleX(1.45);transform-origin:center center;">分部分项</span></div><div class="a" style="left:313.5px;top:353.98999999999995px;width:0.5px;height:8.27px;background:#ececec"></div><div class="a t" style="left:348.75px;top:353.98999999999995px;width:65.0px;height:8.27px;justify-content:center;font-size:4.5px;color:#7a7a7a;font-weight:normal;"><span style="display:inline-block;position:relative;top:1.6px;transform:scaleX(1.45);transform-origin:center center;">010404001001</span></div><div class="a" style="left:348.5px;top:353.98999999999995px;width:0.5px;height:8.27px;background:#ececec"></div><div class="a t" style="left:413.75px;top:353.98999999999995px;width:73.75px;height:8.27px;justify-content:center;font-size:4.5px;color:#7a7a7a;font-weight:normal;"><span style="display:inline-block;position:relative;top:1.6px;transform:scaleX(1.45);transform-origin:center center;">垫层</span></div><div class="a" style="left:413.5px;top:353.98999999999995px;width:0.5px;height:8.27px;background:#ececec"></div><div class="a t" style="left:487.5px;top:353.98999999999995px;width:50.0px;height:8.27px;justify-content:center;font-size:4.5px;color:#7a7a7a;font-weight:normal;"><span style="display:inline-block;position:relative;top:1.6px;transform:scaleX(1.45);transform-origin:center center;">10</span></div><div class="a" style="left:487.25px;top:353.98999999999995px;width:0.5px;height:8.27px;background:#ececec"></div><div class="a t" style="left:537.5px;top:353.98999999999995px;width:50.0px;height:8.27px;justify-content:center;font-size:4.5px;color:#7a7a7a;font-weight:normal;"><span style="display:inline-block;position:relative;top:1.6px;transform:scaleX(1.45);transform-origin:center center;">10</span></div><div class="a" style="left:537.25px;top:353.98999999999995px;width:0.5px;height:8.27px;background:#ececec"></div><div class="a t" style="left:587.5px;top:353.98999999999995px;width:62.799999999999955px;height:8.27px;justify-content:center;font-size:4.5px;color:#7a7a7a;font-weight:normal;"><span style="display:inline-block;position:relative;top:1.6px;transform:scaleX(1.45);transform-origin:center center;">0</span></div><div class="a" style="left:587.25px;top:353.98999999999995px;width:0.5px;height:8.27px;background:#ececec"></div><div class="a" style="left:126.3px;top:370.03px;width:524px;height:0.5px;background:#ececec"></div><div class="a t" style="left:126.3px;top:362.26px;width:17.89999999999999px;height:8.27px;justify-content:center;font-size:4.5px;color:#7a7a7a;font-weight:normal;"><span style="display:inline-block;position:relative;top:1.6px;transform:scaleX(1.45);transform-origin:center center;">9</span></div><div class="a t" style="left:147.7px;top:362.26px;width:67.10000000000002px;height:8.27px;justify-content:flex-start;font-size:4.5px;color:#7a7a7a;font-weight:normal;"><span style="display:inline-block;position:relative;top:1.6px;transform:scaleX(1.55);transform-origin:left center;">吉县新华城中村—A...</span></div><div class="a" style="left:143.95px;top:362.26px;width:0.5px;height:8.27px;background:#ececec"></div><div class="a t" style="left:211.3px;top:362.26px;width:66.69999999999999px;height:8.27px;justify-content:center;font-size:4.5px;color:#7a7a7a;font-weight:normal;"><span style="display:inline-block;position:relative;top:1.6px;transform:scaleX(1.45);transform-origin:center center;">建筑</span></div><div class="a" style="left:211.05px;top:362.26px;width:0.5px;height:8.27px;background:#ececec"></div><div class="a t" style="left:278px;top:362.26px;width:35.75px;height:8.27px;justify-content:center;font-size:4.5px;color:#7a7a7a;font-weight:normal;"><span style="display:inline-block;position:relative;top:1.6px;transform:scaleX(1.45);transform-origin:center center;">9</span></div><div class="a" style="left:277.75px;top:362.26px;width:0.5px;height:8.27px;background:#ececec"></div><div class="a t" style="left:313.75px;top:362.26px;width:35.0px;height:8.27px;justify-content:center;font-size:4.5px;color:#7a7a7a;font-weight:normal;"><span style="display:inline-block;position:relative;top:1.6px;transform:scaleX(1.45);transform-origin:center center;">分部分项</span></div><div class="a" style="left:313.5px;top:362.26px;width:0.5px;height:8.27px;background:#ececec"></div><div class="a t" style="left:348.75px;top:362.26px;width:65.0px;height:8.27px;justify-content:center;font-size:4.5px;color:#7a7a7a;font-weight:normal;"><span style="display:inline-block;position:relative;top:1.6px;transform:scaleX(1.45);transform-origin:center center;">010501004001</span></div><div class="a" style="left:348.5px;top:362.26px;width:0.5px;height:8.27px;background:#ececec"></div><div class="a t" style="left:413.75px;top:362.26px;width:73.75px;height:8.27px;justify-content:center;font-size:4.5px;color:#7a7a7a;font-weight:normal;"><span style="display:inline-block;position:relative;top:1.6px;transform:scaleX(1.45);transform-origin:center center;">满堂基础</span></div><div class="a" style="left:413.5px;top:362.26px;width:0.5px;height:8.27px;background:#ececec"></div><div class="a t" style="left:487.5px;top:362.26px;width:50.0px;height:8.27px;justify-content:center;font-size:4.5px;color:#7a7a7a;font-weight:normal;"><span style="display:inline-block;position:relative;top:1.6px;transform:scaleX(1.45);transform-origin:center center;">10</span></div><div class="a" style="left:487.25px;top:362.26px;width:0.5px;height:8.27px;background:#ececec"></div><div class="a t" style="left:537.5px;top:362.26px;width:50.0px;height:8.27px;justify-content:center;font-size:4.5px;color:#7a7a7a;font-weight:normal;"><span style="display:inline-block;position:relative;top:1.6px;transform:scaleX(1.45);transform-origin:center center;">10</span></div><div class="a" style="left:537.25px;top:362.26px;width:0.5px;height:8.27px;background:#ececec"></div><div class="a t" style="left:587.5px;top:362.26px;width:62.799999999999955px;height:8.27px;justify-content:center;font-size:4.5px;color:#7a7a7a;font-weight:normal;"><span style="display:inline-block;position:relative;top:1.6px;transform:scaleX(1.45);transform-origin:center center;">0</span></div><div class="a" style="left:587.25px;top:362.26px;width:0.5px;height:8.27px;background:#ececec"></div><div class="a" style="left:646px;top:298px;width:3.8px;height:13.3px;background:#dcdcdc;border-radius:1px"></div><div class="a" style="left:590.5px;top:282.8px;width:51.5px;height:12.9px;border:1.3px solid #e8262a;border-radius:1.5px"></div><div class="a" style="left:118px;top:368.8px;width:542px;height:35.2px;background:#fff"></div>
</div>
</body>
</html>
